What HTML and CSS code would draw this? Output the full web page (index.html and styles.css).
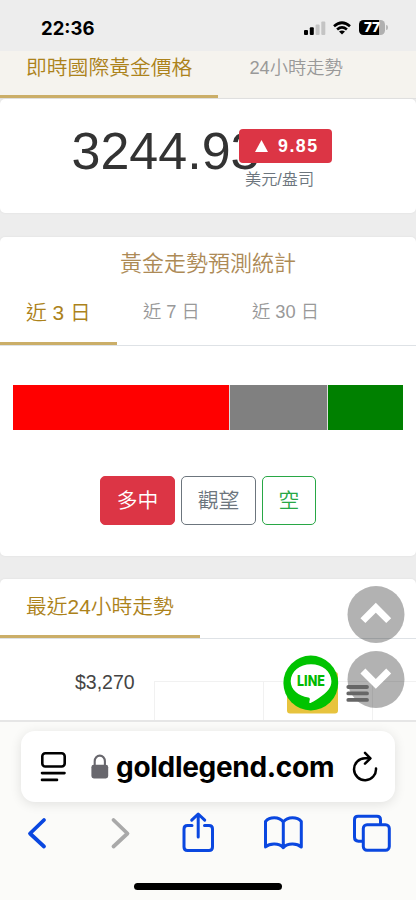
FILE: index.html
```
<!DOCTYPE html>
<html lang="zh-Hant">
<head>
<meta charset="utf-8">
<title>goldlegend.com</title>
<link rel="stylesheet" href="styles.css">
</head>
<body>
<div class="phone">
  <header class="status">
    <span class="clock">22:36</span>
    <div class="indicators">
      <svg class="signal" width="22" height="14" viewBox="0 0 22 14"><rect x="0" y="9" width="4" height="5" rx="1"/><rect x="5.8" y="6.3" width="4" height="7.700" rx="1"/><g fill="#c4c4c4"><rect x="11.600" y="3.500" width="4" height="10.500" rx="1"/><rect x="17.300" y="0.500" width="4" height="13.500" rx="1"/></g></svg>
      <svg class="wifi" width="18" height="14" viewBox="0 0 18 14"><g fill="none" stroke="#000" stroke-width="2.700"><path d="M1 5.200Q9-1.700 17 5.200"/><path d="M4.100 8.500Q9 4.300 13.900 8.500"/></g><path d="M9 13.500L6 10.600Q9 8.200 12 10.600Z"/></svg>
      <div class="battery"><span>77</span></div><i class="battery-tip"></i>
    </div>
  </header>

  <main class="page">
    <nav class="tabs tabs-top">
      <a class="tab active">即時國際黃金價格</a>
      <a class="tab">24小時走勢</a>
    </nav>
    <section class="card price-card">
      <span class="price">3244.93</span>
      <div class="change">
        <div class="badge"><svg width="13" height="12" viewBox="0 0 13 12"><path fill="#fff" d="M6.500 0L13 12H0Z"/></svg><b>9.85</b></div>
        <span class="unit">美元/盎司</span>
      </div>
    </section>

    <section class="card forecast">
      <h2>黃金走勢預測統計</h2>
      <nav class="tabs tabs-days">
        <a class="tab active">近 3 日</a>
        <a class="tab">近 7 日</a>
        <a class="tab">近 30 日</a>
      </nav>
      <div class="ratio"><i class="long"></i><i class="hold"></i><i class="short"></i></div>
      <div class="buttons">
        <button class="btn danger">多中</button>
        <button class="btn secondary">觀望</button>
        <button class="btn success">空</button>
      </div>
    </section>

    <section class="card trend">
      <nav class="tabs tabs-trend"><a class="tab active">最近24小時走勢</a></nav>
      <div class="chart">
        <span class="axis">$3,270</span>
        <div class="plot"><i></i><i></i><i></i></div>
      </div>
    </section>
  </main>

  <div class="floating">
    <svg width="134" height="130" viewBox="282 584 134 130">
      <g fill="#000" fill-opacity=".3"><circle cx="376" cy="614.500" r="28.500"/><circle cx="376" cy="679.500" r="28.500"/></g>
      <g fill="none" stroke="#fff" stroke-width="7"><path d="M362.900 620.600L375.800 607.700L388.700 620.600"/><path d="M362.900 671L375.800 683.900L388.700 671"/></g>
      <g stroke="#666" stroke-width="3.800" stroke-linecap="round"><path d="M348.300 687h18.700M348.300 693.400h18.700M348.300 699.900h18.700"/></g>
      <rect x="287" y="672" width="51" height="41.500" rx="3" fill="#e7c33d"/>
      <circle cx="310.800" cy="683" r="27.400" fill="#00c300"/>
      <path fill="#fff" d="M311 664.300c-11.200 0-20.300 7.300-20.300 17 0 8.600 7.800 14.900 17.600 16.300 1.200.3 1.700.8 1.500 2l-.5 2.500c-.2 1 .3 1.200 1.200.8 3-1.300 13.500-7.400 18.100-13.500 2-2.600 2.800-5 2.800-8.100 0-9.700-9.200-17-20.400-17Z"/>
      <text class="line-text" x="297" y="686.300" textLength="28" lengthAdjust="spacingAndGlyphs">LINE</text>
    </svg>
  </div>

  <footer class="browser">
    <div class="address">
      <svg width="28" height="32" viewBox="0 0 28 32"><g fill="none" stroke="#000" stroke-width="2.600" stroke-linecap="round"><rect x="2.300" y="2.300" width="22.400" height="13.200" rx="3"/><path d="M2 22.100h22.500M2 28.900h15"/></g></svg>
      <svg class="lock" width="18" height="25" viewBox="0 0 18 25"><rect x=".4" y="10.800" width="16.800" height="13.600" rx="2.400" fill="#68676d"/><path d="M3.700 12V7.200a5.100 5.600 0 0 1 10.200 0V12" fill="none" stroke="#68676d" stroke-width="2.100"/></svg>
      <span class="url">goldlegend.com</span>
      <svg class="reload" width="26" height="32" viewBox="352 750 26 32"><g fill="none" stroke="#000" stroke-width="2.500" stroke-linecap="round" stroke-linejoin="round"><path d="M370 757.200H365a11 11 0 1 0 11 10.200"/><path d="M365 751.800L370.400 757.300L365 762.700"/></g></svg>
    </div>
    <svg class="tools" width="416" height="48" viewBox="0 808 416 48">
      <g fill="none" stroke="#0a47e0" stroke-width="3" stroke-linecap="round" stroke-linejoin="round">
        <path stroke-width="3.800" d="M44 820L30 833.500L44 846.500"/>
        <path stroke="#a9a9a9" stroke-width="3.800" d="M113.500 820L127.500 833.500L113.500 846.500"/>
        <path d="M192 825.500h-4.500q-3.500 0-3.500 3.500v18q0 3.500 3.500 3.500h21.500q3.500 0 3.500-3.500v-18q0-3.500-3.500-3.500h-4.500M198.200 837v-22M191.700 820.200L198.200 814L204.700 820.200"/>
        <path d="M283.300 822C279 816.300 269.500 816.800 265.500 821.500V847C270 843 279 843 283.300 847.700C287.600 843 296.700 843 301.300 847V821.500C297.300 816.800 287.800 816.300 283.300 822V847"/>
        <path d="M362 841.300h-3.500q-4-.3-4-4v-17.600q0-3.500 3.500-3.500h19q3.500 0 3.500 3.500v3.500"/>
        <rect x="363.300" y="824.700" width="26" height="25.500" rx="3.700"/>
      </g>
    </svg>
    <div class="home-bar"></div>
  </footer>
</div>
</body>
</html>
```
FILE: styles.css
```
* { box-sizing: border-box; }
body {
  margin: 0;
  font-family: "Liberation Sans", "Noto Sans CJK TC", sans-serif;
  font-weight: 350;
  background: #ededed;
}
.phone {
  position: relative;
  width: 416px;
  height: 900px;
  overflow: hidden;
  display: flex;
  flex-direction: column;
}
svg { display: block; flex: none; }
.status {
  height: 51px;
  flex: none;
  display: flex;
  justify-content: space-between;
  padding: 15px 28px 0 41px;
  background: #ededed;
}
.clock { font: 700 18.500px/26px Inter, sans-serif; letter-spacing: 0; }
.indicators { display: flex; height: 25px; align-items: center; }
.wifi { margin: 0 8px 0 7px; }
.battery {
  width: 26px;
  height: 15px;
  border-radius: 4.500px;
  background: linear-gradient(90deg, #000 77%, #b0b0b0 77%);
  color: #fff;
  text-align: center;
  font: 800 13.500px/15px Inter, sans-serif;
}
.battery-tip { width: 2px; height: 5px; margin-left: 1px; border-radius: 0 2px 2px 0; background: #b8b8b8; }

.page { height: 669px; flex: none; overflow: hidden; }
.tabs { display: flex; }
.tab { flex: none; font-size: 18.300px; color: #999; white-space: nowrap; }
.tab.active { font-size: 20.800px; color: #ac821a; border-bottom: 3px solid #cbae68; padding: 0 26px; }
.tabs-top { height: 48px; background: #f5f3ee; border-bottom: 1px solid #e0e0e0; }
.tabs-top .tab { line-height: 34px; }
.tabs-top .tab:last-child { margin-left: 31px; }
.card { background: #fff; border-radius: 5px; box-shadow: 0 0 2px #dcdcdc; }
.price-card { height: 114px; display: flex; padding-left: 71.500px; }
.price { width: 167.500px; flex: none; color: #333; font-size: 52px; line-height: 60px; padding-top: 22px; }
.change { padding-top: 30px; position: relative; }
.badge {
  width: 92.500px;
  height: 34px;
  display: flex;
  align-items: center;
  gap: 10px;
  padding-left: 16px;
  border-radius: 4px;
  background: #dc3545;
  color: #fff;
  font-size: 17.800px;
  letter-spacing: 1.500px;
}
.badge b { font-weight: 700; }
.unit { display: block; margin: 4px 0 0 6px; font-size: 16.200px; line-height: 24px; color: #6c757d; }

.forecast { height: 319px; margin-top: 24px; }
h2 { margin: 0; height: 50px; text-align: center; color: #ad8a56; font-size: 22px; line-height: 54px; font-weight: 350; }
.tabs-days { height: 59px; border-bottom: 1px solid #dee2e6; }
.tabs-days .tab { line-height: 50px; }
.tabs-days .active { line-height: 51px; height: 58px; width: 117px; }
.tabs-days .tab:nth-child(2) { margin-left: 26px; width: 109px; }
.ratio { display: flex; gap: 1px; height: 45px; margin: 39px 13px 0; background: #ddd; }
.long { width: 216px; background: #f00; }
.hold { width: 97px; background: #808080; }
.short { flex: 1; background: #008000; }
.buttons { display: flex; gap: 6px; justify-content: center; margin-top: 46px; }
.btn {
  height: 49px;
  width: 75px;
  padding: 0 0 2px;
  border: 1.300px solid;
  border-radius: 5px;
  font: 350 20.800px/43px "Noto Sans CJK TC", sans-serif;
  background: #fff;
}
.danger { background: #dc3545; border-color: #dc3545; color: #fff; }
.secondary { color: #6c757d; }
.success { width: 54px; color: #28a745; }

.trend { height: 200px; margin-top: 23px; }
.tabs-trend { height: 60px; border-bottom: 1px solid #dee2e6; }
.tabs-trend .tab { line-height: 55px; }
.chart { display: flex; padding: 29px 0 0 75px; }
.axis { width: 79px; flex: none; color: #444; font-size: 19.500px; line-height: 29px; }
.plot { flex: 1; height: 100px; margin-top: 13px; border-top: 1px solid #f1f1f1; display: flex; overflow: hidden; }
.plot i { width: 109px; flex: none; border-left: 1px solid #f1f1f1; }

.floating { position: absolute; left: 282px; top: 584px; }
.line-text { font: 800 14.200px Inter, sans-serif; fill: #00b900; }

.browser {
  height: 180px;
  flex: none;
  padding-top: 9px;
  background: #fbfbf9;
  border-top: 2px solid #e6e6e6;
  display: flex;
  flex-direction: column;
  align-items: center;
}
.address {
  width: 374px;
  height: 71px;
  flex: none;
  display: flex;
  align-items: center;
  padding: 0 17px 0 19px;
  border-radius: 14px;
  background: #fff;
  box-shadow: 0 2px 12px rgba(0, 0, 0, .11);
}
.lock { margin-left: 23px; }
.url { width: 228px; margin-left: 7px; flex: none; font: 650 28px/40px Inter, sans-serif; letter-spacing: -.3px; white-space: nowrap; }
.reload { margin-left: 8px; }
.tools { margin-top: 6px; }
.home-bar { width: 148px; height: 7px; margin-top: 27px; border-radius: 4px; background: #000; }
```
